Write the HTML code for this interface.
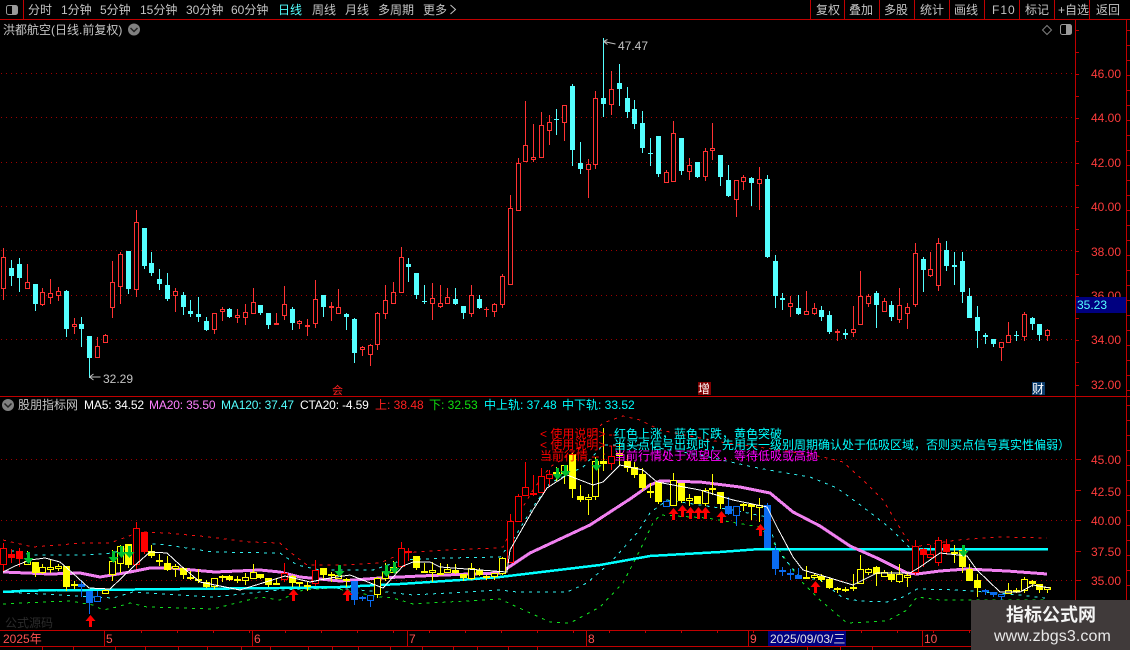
<!DOCTYPE html>
<html>
<head>
<meta charset="utf-8">
<style>
html,body{margin:0;padding:0;background:#000;width:1130px;height:650px;overflow:hidden}
svg{position:absolute;left:0;top:0}
text{font-family:"Liberation Sans","WenQuanYi Zen Hei","Noto Sans CJK SC",sans-serif;font-size:12px;white-space:pre}
.g{fill:#c4c4c4}
.r{fill:#ff3c3c}
</style>
</head>
<body>
<svg id="s" width="1130" height="650" viewBox="0 0 1130 650" xmlns="http://www.w3.org/2000/svg">
<g id="chart"></g>
<g id="frame" shape-rendering="crispEdges" fill="#c00000">
<rect x="0" y="19" width="1130" height="1"/>
<rect x="23" y="0" width="1" height="19"/>
<rect x="810" y="0" width="1" height="19"/><rect x="844" y="0" width="1" height="19"/>
<rect x="879" y="0" width="1" height="19"/><rect x="914" y="0" width="1" height="19"/>
<rect x="949" y="0" width="1" height="19"/><rect x="984" y="0" width="1" height="19"/>
<rect x="1019" y="0" width="1" height="19"/><rect x="1054" y="0" width="1" height="19"/>
<rect x="1089" y="0" width="1" height="19"/>
<rect x="1075" y="20" width="1" height="630"/>
<rect x="1126" y="20" width="1" height="630"/>
<rect x="0" y="396" width="1130" height="1"/>
<rect x="0" y="630" width="1075" height="1"/>
<rect x="0" y="646" width="1075" height="1"/>
<rect x="104" y="630" width="1" height="16"/><rect x="252" y="630" width="1" height="16"/>
<rect x="407" y="630" width="1" height="16"/><rect x="586" y="630" width="1" height="16"/>
<rect x="748" y="630" width="1" height="16"/><rect x="922" y="630" width="1" height="16"/>
<rect x="42" y="646" width="1" height="4"/><rect x="73" y="646" width="1" height="4"/>
<rect x="115" y="646" width="1" height="4"/><rect x="145" y="646" width="1" height="4"/>
<rect x="178" y="646" width="1" height="4"/><rect x="207" y="646" width="1" height="4"/>
<rect x="241" y="646" width="1" height="4"/><rect x="270" y="646" width="1" height="4"/>
<rect x="308" y="646" width="1" height="4"/><rect x="332" y="646" width="1" height="4"/>
<rect x="358" y="646" width="1" height="4"/><rect x="390" y="646" width="1" height="4"/>
<rect x="422" y="646" width="1" height="4"/><rect x="453" y="646" width="1" height="4"/>
<rect x="477" y="646" width="1" height="4"/><rect x="508" y="646" width="1" height="4"/>
<rect x="537" y="646" width="1" height="4"/><rect x="807" y="646" width="1" height="4"/>
<rect x="840" y="646" width="1" height="4"/><rect x="872" y="646" width="1" height="4"/>
</g>

<!-- top-left icon -->
<rect x="6.5" y="5.5" width="11" height="9" rx="2" fill="none" stroke="#9a9a9a"/>
<rect x="12" y="6" width="5" height="8" fill="#9a9a9a"/>
<!-- toolbar -->
<text class="g" x="28" y="14">分时</text>
<text class="g" x="61" y="14">1分钟</text>
<text class="g" x="100" y="14">5分钟</text>
<text class="g" x="140" y="14">15分钟</text>
<text class="g" x="186" y="14">30分钟</text>
<text class="g" x="231" y="14">60分钟</text>
<text x="278" y="14" fill="#54ffff">日线</text>
<text class="g" x="312" y="14">周线</text>
<text class="g" x="345" y="14">月线</text>
<text class="g" x="378" y="14">多周期</text>
<text class="g" x="423" y="14">更多</text>
<path d="M450.5 5l5 4.5-5 4.5" fill="none" stroke="#c4c4c4"/>
<text class="g" x="816" y="14">复权</text>
<text class="g" x="849" y="14">叠加</text>
<text class="g" x="884" y="14">多股</text>
<text class="g" x="920" y="14">统计</text>
<text class="g" x="954" y="14">画线</text>
<text class="g" x="992" y="14" letter-spacing="1">F10</text>
<text class="g" x="1025" y="14">标记</text>
<text class="g" x="1058" y="14">+自选</text>
<text class="g" x="1096" y="14">返回</text>
<!-- title -->
<text class="g" x="3" y="34">洪都航空(日线.前复权)</text>
<circle cx="134" cy="29.5" r="6" fill="#808080"/>
<path d="M130.5 28l3.5 3.5 3.5-3.5" fill="none" stroke="#222" stroke-width="1.5"/>
<path d="M1047 25.5l4.5 4.5-4.5 4.5-4.5-4.5z" fill="none" stroke="#808080"/>
<rect x="1060.5" y="24.5" width="11" height="10" rx="2" fill="none" stroke="#9a9a9a"/>
<rect x="1066" y="25" width="5" height="9" fill="#9a9a9a"/>

<!-- price labels -->
<g class="r">
<text x="1091" y="78">46.00</text><text x="1091" y="122">44.00</text>
<text x="1091" y="167">42.00</text><text x="1091" y="211">40.00</text>
<text x="1091" y="256">38.00</text><text x="1091" y="300">36.00</text>
<text x="1091" y="344">34.00</text><text x="1091" y="389">32.00</text>
<text x="1091" y="464">45.00</text><text x="1091" y="496">42.50</text>
<text x="1091" y="525">40.00</text><text x="1091" y="556">37.50</text>
<text x="1091" y="585">35.00</text>
</g>
<rect x="1076" y="297" width="50" height="16" fill="#000080"/>
<text x="1077" y="309" fill="#54ffff">35.23</text>

<!-- extremes -->
<path d="M603.5 41.5l12 2.5M603.5 41.5l4-2M603.5 41.5l4 3" fill="none" stroke="#c0c0c0"/>
<text class="g" x="618" y="50">47.47</text>
<path d="M89.5 377h11M89.5 377l4-3M89.5 377l4 3" fill="none" stroke="#c0c0c0"/>
<text class="g" x="103" y="383">32.29</text>

<!-- event markers -->
<text x="332" y="394" fill="#ff2020" style="font-size:11px">会</text>
<rect x="698" y="382" width="13" height="13" fill="#800000"/>
<text x="698" y="393" fill="#fff">增</text>
<rect x="1032" y="382" width="13" height="13" fill="#0a3a6a"/>
<text x="1032" y="393" fill="#fff">财</text>

<!-- indicator title -->
<circle cx="8" cy="405" r="6" fill="#808080"/>
<path d="M4.5 403.5l3.5 3.5 3.5-3.5" fill="none" stroke="#222" stroke-width="1.5"/>
<text class="g" x="18" y="409">股朋指标网</text>
<text x="84" y="409" fill="#fff" letter-spacing="-.15">MA5: 34.52</text>
<text x="149" y="409" fill="#ff80ff" letter-spacing="-.15">MA20: 35.50</text>
<text x="221" y="409" fill="#54ffff" letter-spacing="-.15">MA120: 37.47</text>
<text x="300" y="409" fill="#fff" letter-spacing="-.15">CTA20: -4.59</text>
<text x="375" y="409" fill="#ff2020">上: 38.48</text>
<text x="429" y="409" fill="#10e010">下: 32.53</text>
<text x="484" y="409" fill="#00ffff">中上轨: 37.48</text>
<text x="562" y="409" fill="#00ffff">中下轨: 33.52</text>

<!-- overlay text -->
<text x="540" y="438" fill="#ff0000">&lt; 使用说明&gt; --</text>
<text x="614" y="438" fill="#00ffff">红色上涨，蓝色下跌，黄色突破</text>
<text x="540" y="449" fill="#ff0000">&lt; 使用说明&gt; --</text>
<text x="614" y="449" fill="#00ffff">当买点信号出现时，先用天一级别周期确认处于低吸区域，否则买点信号真实性偏弱）</text>
<text x="540" y="460" fill="#ff0000">当前行情 -- :</text>
<text x="614" y="460" fill="#ff00ff">当前行情处于观望区，等待低吸或高抛</text>

<text x="5" y="627" fill="#2c2c2c">公式源码</text>

<!-- date axis -->
<text x="3" y="643" fill="#ff5050">2025年</text>
<text x="106" y="643" fill="#ff5050">5</text>
<text x="254" y="643" fill="#ff5050">6</text>
<text x="409" y="643" fill="#ff5050">7</text>
<text x="588" y="643" fill="#ff5050">8</text>
<text x="750" y="643" fill="#ff5050">9</text>
<text x="924" y="643" fill="#ff5050">10</text>
<rect x="768" y="631" width="78" height="15" fill="#000080"/>
<text x="770" y="643" fill="#e0e0e0">2025/09/03/三</text>

<!-- watermark -->
<rect x="971" y="600" width="159" height="50" fill="#403a3a"/>
<text x="1006" y="621" fill="#f4f4f4" style="font-size:18px;font-weight:bold">指标公式网</text>
<text x="994" y="641" fill="#e8e8e8" style="font-size:16px" letter-spacing=".1">www.zbgs3.com</text>
</svg>

<script>
(function(){
var d=[
[230,[55,82,178,210],[90,114,137,168],[84,102,144,186],[102,157,176,176],[162,162,222,243],[174,187,224,228],[148,190,203,222],[171,184,197,213],[180,183,297,321],[264,283,292,312],[261,282,297,351],[318,318,384,445],[321,349,383,383],[312,316,338,338],[93,157,233,264],[66,72,170,222],[63,63,177,192],[-60,-24,179,201],[-6,-6,108,117],[66,99,129,138],[117,147,162,180],[129,165,207,213],[174,183,197,246],[186,195,231,255],[210,243,252,261],[201,252,261,276],[261,273,300,303],[249,249,300,312],[232,237,246,273],[234,237,261,264],[237,256,263,279],[222,246,263,285],[174,216,252,252],[225,225,249,255],[249,249,285,297],[249,279,285,285],
[168,222,258,270],[231,237,279,300],[270,273,282,297],[267,285,291,318],[150,207,282,294],[195,195,231,261],[216,228,234,273],[177,231,252,252],[249,252,261,300],[264,267,369,399],[348,351,360,378],[342,345,375,408],[246,249,345,360],[165,210,252,267],[156,186,222,222],[51,81,189,189],[84,102,111,156],[129,129,195,207],[165,213,216,222],[159,204,222,270],[165,219,231,234],[174,201,222,222],[174,207,222,225],[228,228,249,267],[165,195,252,261],[195,207,234,237],[231,237,240,261],[219,222,246,261],[132,138,225,234],[-105,-65,165,165]],
[40,[354,370,513,513],[183,316,365,367],[252,352,359,367],[216,256,353,353],[225,247,272,315],[207,237,240,285],[195,196,248,303],[132,138,330,378],[306,369,387,402],[357,373,389,474],[153,175,374,387],[-6,174,192,231],[93,148,194,225],[72,129,147,198],[141,174,216,234],[180,207,252,267],[213,249,324,339],[294,339,342,378],[288,288,402,411],[390,397,428,428],[243,280,425,425],[294,294,393,405],[354,376,395,420],[366,366,411,414],[324,334,410,423],[249,325,334,360],[345,345,411,438],[375,420,468,471],[420,421,479,531]],
[170,[15,22,35,60],[20,24,39,108],[-9,28,41,120],[15,27,261,264],[255,273,378,414],[369,384,390,420],[378,400,410,441],[375,414,432,435],[363,424,434,434],[399,415,431,435],[408,420,441,453],[423,435,486,492],[477,483,489,513],[477,489,495,507],[408,478,488,501],[303,379,464,464],[372,379,401,411],[363,369,405,474],[384,394,426,426],[393,405,441,453],[354,406,449,459],[399,412,431,477],[219,250,404,411],[261,267,300,366],[246,298,318,321],[204,220,347,363],[213,240,288,303],[246,285,291,345],[246,273,366,399],[354,378,444,444],[408,441,483,534],[489,495,501,522],[507,507,522,531],[516,516,533,573],[456,496,518,518],[483,495,498,513],[426,432,500,513],[441,444,462,480],[462,462,495,513],[477,481,497,513]]
];
var up={0:1,3:1,5:1,6:1,7:1,9:1,12:1,13:1,14:1,15:1,17:1,22:1,27:1,28:1,30:1,31:1,32:1,35:1,36:1,38:1,39:1,40:1,42:1,43:1,46:1,47:1,48:1,49:1,50:1,51:1,55:1,56:1,57:1,60:1,62:1,63:1,64:1,65:1,66:1,67:1,68:1,69:1,70:1,72:1,75:1,76:1,78:1,85:1,86:1,88:1,90:1,91:1,94:1,95:1,97:1,101:1,103:1,104:1,107:1,109:1,110:1,111:1,113:1,115:1,116:1,117:1,119:1,120:1,128:1,129:1,131:1,134:1};
var R=[0,1,2,17,18,36,40,51,52,65,66,67,68,69,70,78,117,118,119,120,121];
var B=[10,11,12,45,46,47,85,93,94,98,99,100,101,102,126,127,128];
var c=[];
d.forEach(function(g){var b=g[0];for(var k=1;k<g.length;k++){var a=g[k];c.push([b+a[0]/3,b+a[1]/3,b+a[2]/3,b+a[3]/3]);}});
function rect(x,y,w,hh,f){return '<rect x="'+x+'" y="'+y+'" width="'+w+'" height="'+hh+'" fill="'+f+'"/>';}
function hline(y){var s='';for(var x=1;x<1075;x+=5)s+=rect(x,y,1,1,'#a00000');return s;}
function cand(cx,a,col,hollow,half,minT){
  var hi=Math.round(a[0]),t=Math.round(a[1]),b=Math.round(a[2]),lo=Math.round(a[3]),s='',W=half*2+1;
  if(b-t<minT)b=t+minT;
  if(hi<t)s+=rect(cx,hi,1,t-hi,col);
  if(lo>b)s+=rect(cx,b,1,lo-b,col);
  if(b-t<=2){s+=rect(cx-half,t,W,b-t,col);return s;}
  s+=rect(cx-half,t,W,b-t,col);
  if(hollow)s+=rect(cx-half+1,t+1,W-2,b-t-2,'#000');
  return s;
}
var sh='';
[73,117,162,206,250,295,339,459,520,580].forEach(function(y){sh+=hline(y);});
for(var y=29.5;y<396;y+=22.2)sh+=rect(1076,Math.round(y),3,1,'#c00000');
[459,490,520,551,580].forEach(function(y){sh+=rect(1076,y,5,1,'#c00000');});
for(var y2=30;y2<640;y2+=15)sh+=rect(1127,y2,3,1,'#c00000');
for(var t=141;t<1075;t+=36)sh+=rect(t,631,1,2,'#c00000');
var ms='';
c.forEach(function(a,i){var cx=Math.floor(3.9+7.79*i);var u=!!up[i];ms+=cand(cx,a,u?'#ff3232':'#54ffff',u,2,1);});
function pl(p,st,w,da){var s='<polyline fill="none" stroke="'+st+'" stroke-width="'+w+'"'+(da?' stroke-dasharray="'+da+'"':'')+' points="';
 for(var i=0;i<p.length;i+=2)s+=p[i]+','+p[i+1]+' ';return s+'"/>';}
var ls='';
ls+=pl([3,604,43,602,70,601,93,605,103,610,117,607,130,603,147,607,213,609,260,597,280,600,303,590,333,588,380,597,393,598,413,604,500,599,517,607,550,622,570,623,600,607,623,583,640,550,653,523,660,515,707,518,760,527,777,547,800,580,820,600,847,623,887,621,907,610,917,597,940,600,973,600,1047,600],'#10e020',1,'3 5');
ls+=pl([3,592,60,595,113,598,133,592,213,597,280,590,330,588,387,592,413,595,500,590,517,592,567,592,587,583,610,563,637,533,650,513,667,500,733,510,767,517,777,550,800,577,820,580,843,598,860,601,887,602,903,597,917,589,960,590,1020,595,1045,598],'#30f0f0',1,'3 5');
ls+=pl([3,549,33,555,83,555,113,553,140,543,167,545,213,552,280,553,297,565,320,570,373,570,403,560,447,558,500,557,513,540,533,507,550,483,583,467,603,445,640,445,700,455,753,467,780,472,810,477,837,488,863,507,890,528,910,548,960,550,1047,550],'#30f0f0',1,'3 5');
ls+=pl([3,540,33,547,83,543,110,543,140,532,167,533,200,536,250,542,280,543,290,552,307,565,347,565,380,563,403,553,447,550,497,548,503,547,517,517,533,490,550,467,577,450,603,423,623,416,640,420,660,430,720,442,780,450,823,457,843,462,863,480,883,500,903,533,913,547,957,540,1000,537,1047,538],'#f01010',1,'3 5');
ls+=pl([3,592,20,591,57,590,90,590,180,589,280,588,340,587,400,584,460,580,500,577,600,565,650,556,720,552,760,549,1048,549],'#00ffff',2.5);
ls+=pl([3,572,50,574,80,573,100,577,130,572,150,568,170,568,215,572,260,570,280,572,300,577,340,581,380,578,420,576,470,574,500,573,530,553,590,525,630,499,650,485,660,481,700,482,740,487,770,493,793,512,820,526,850,546,877,558,907,573,917,574,940,571,967,569,1007,571,1047,574],'#f080f0',3);
var wl=pl([3,572,15,566,30,560,45,558,60,562,67,568,89,588,110,589,133,567,150,552,167,553,180,565,200,582,240,590,285,576,310,582,330,578,350,575,383,588,403,566,413,562,430,562,440,567,507,572,510,550,533,510,547,488,567,475,593,485,603,482,620,465,643,470,657,482,700,490,733,500,767,507,777,527,793,557,803,570,820,575,853,585,877,573,910,573,920,567,940,553,967,556,977,570,1000,592,1020,592,1033,585,1050,588],'#ffffff',1);
var ss='';
c.forEach(function(a,i){
  var cx=Math.floor(3.9+7.79*i),col=R.indexOf(i)>=0?'#ff0000':(B.indexOf(i)>=0?'#0a6cf0':'#ffff00');
  var m=a.map(function(y){return 447.4+(y-73.3)*0.545;});
  ss+=cand(cx,m,col,!!up[i],3,2);
});
var ar='';
[[90,615],[293,589],[347,589],[673,508],[682,505],[690,507],[698,507],[705,507],[721,511],[760,524],[815,581]].forEach(function(p){
  var x=p[0]+.5,y=p[1];ar+='<path fill="#ff0000" d="M'+x+' '+y+'l5 6h-3.5v6h-3v-6h-3.5z"/>';});
[[28,552],[113,551],[121,546],[129,546],[339,565],[386,565],[394,562],[557,468],[565,465],[596,459],[963,545]].forEach(function(p){
  var x=p[0]+.5,y=p[1];ar+='<path fill="#00c030" d="M'+(x-1.5)+' '+y+'h3v6h3.5l-5 6-5-6h3.5z"/>';});
document.getElementById('chart').innerHTML='<g shape-rendering="crispEdges">'+sh+ms+ls+ss+wl+'</g>'+ar;
})();
</script>
</body>
</html>
